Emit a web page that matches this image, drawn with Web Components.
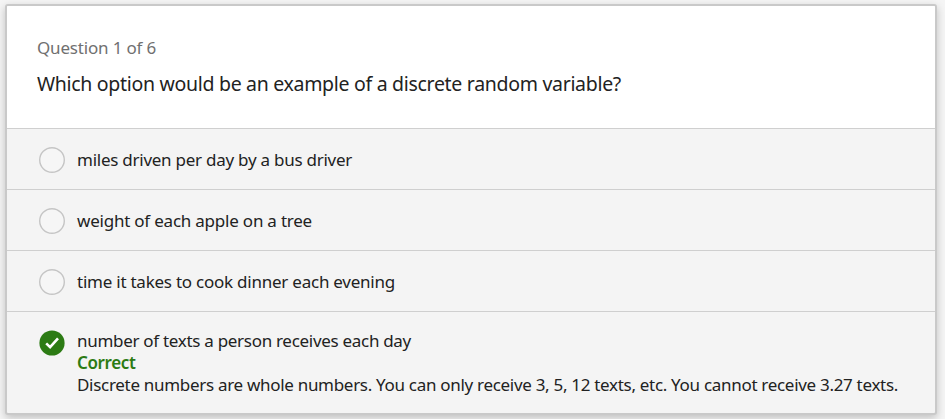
<!DOCTYPE html>
<html lang="en">
<head>
<meta charset="utf-8">
<title>Question 1 of 6</title>
<style>
html{height:100%}
body{margin:0;height:419px;overflow:hidden;background:#f5f5f5;font-family:"Noto Sans","Open Sans",sans-serif;font-weight:400;color:#222;font-size:17px;line-height:22px}
</style>
</head>
<body>
<quiz-card>
  <quiz-question slot="question">
    <span slot="progress">Question 1 of 6</span>
    Which option would be an example of a discrete random variable?
  </quiz-question>
  <quiz-option style="--track:-.255px">miles driven per day by a bus driver</quiz-option>
  <quiz-option style="--track:-.221px">weight of each apple on a tree</quiz-option>
  <quiz-option style="--track:-.238px">time it takes to cook dinner each evening</quiz-option>
  <quiz-option correct style="--track:-.297px">number of texts a person receives each day
    <span slot="feedback">Discrete numbers are whole numbers. You can only receive 3, 5, 12 texts, etc. You cannot receive 3.27 texts.</span>
  </quiz-option>
</quiz-card>
<script>
const define = (name, markup) => {
  const template = document.createElement('template');
  template.innerHTML = markup;
  customElements.define(name, class extends HTMLElement {
    constructor() {
      super();
      this.attachShadow({mode: 'open'}).append(template.content.cloneNode(true));
    }
  });
};

define('quiz-card', `
<style>
:host{display:block;padding:4px 8px 0 5px}
.card{box-sizing:border-box;height:411px;display:flex;flex-direction:column;border:2px solid #c9c9c9;border-radius:3px;background:#f4f4f4;box-shadow:0 3px 9px rgba(0,0,0,.22);overflow:hidden}
</style>
<div class="card"><slot name="question"></slot><slot></slot></div>`);

define('quiz-question', `
<style>
:host{display:block;box-sizing:border-box;height:122px;padding:31px 30px 0;background:#fff}
.progress{color:#707070;letter-spacing:-.178px}
.title{margin-top:12px;font-size:19.5px;line-height:26px;letter-spacing:-.305px;white-space:nowrap}
</style>
<div class="progress"><slot name="progress"></slot></div>
<div class="title"><slot></slot></div>`);

define('status-mark', `
<style>
:host{display:block;width:26px;height:26px}
svg{display:block}
.done{display:none}
:host([checked]) .done{display:block}
:host([checked]) .empty{display:none}
</style>
<svg width="26" height="26" viewBox="0 0 26 26">
<circle class="empty" cx="13" cy="13" r="12.3" fill="#f6f6f6" stroke="#c5c5c5" stroke-width="1.4"/>
<g class="done"><circle cx="13" cy="13" r="12.6" fill="#2c7b14"/><path d="M7.2 13.4 11.1 17.2 19 8.4" fill="none" stroke="#fff" stroke-width="2.6"/></g>
</svg>`);

customElements.define('quiz-option', class extends HTMLElement {
  connectedCallback() {
    const correct = this.hasAttribute('correct');
    this.attachShadow({mode: 'open'}).innerHTML = `
<style>
:host{display:flex;box-sizing:border-box;height:61px;padding:1px 32px 0;gap:12px;align-items:center;border-top:1px solid #cfcfcf;white-space:nowrap}
:host([correct]){height:auto;flex:1;align-items:flex-start;padding-top:18px}
.label{letter-spacing:var(--track)}
.verdict{font-weight:600;color:#2c7b14;letter-spacing:-.39px}
.feedback{letter-spacing:-.301px}
</style>
<status-mark ${correct ? 'checked' : ''}></status-mark>
<div class="body"><div class="label"><slot></slot></div>
${correct ? '<div class="verdict">Correct</div><div class="feedback"><slot name="feedback"></slot></div>' : ''}</div>`;
  }
});
</script>
</body>
</html>
